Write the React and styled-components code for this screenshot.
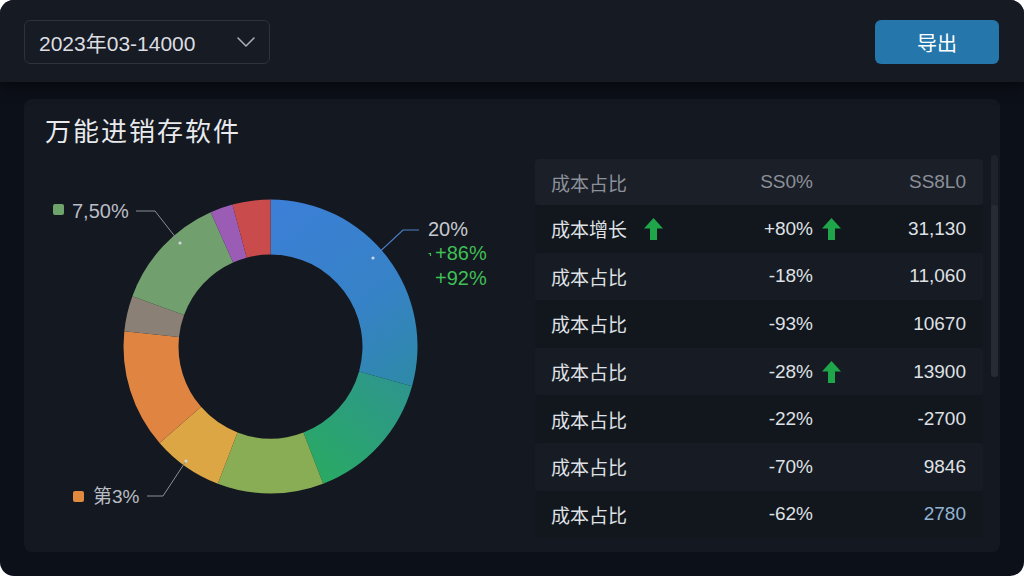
import React from "react";
import styled, { createGlobalStyle } from "styled-components";

const Global = createGlobalStyle`
  html, body { margin: 0; padding: 0; background: #ffffff; }
  body { font-family: "Liberation Sans", "Noto Sans CJK SC", sans-serif; }
  * { box-sizing: border-box; }
`;

const Frame = styled.div`
  width: 1024px;
  height: 576px;
  border-radius: 14px;
  overflow: hidden;
  background: #0c1019;
  display: flex;
  flex-direction: column;
`;

const TopBar = styled.header`
  height: 82px;
  flex: none;
  background: #151a23;
  padding: 20px 25px 0 24px;
  display: flex;
  justify-content: space-between;
  align-items: flex-start;
  box-shadow: 0 6px 14px rgba(0, 0, 0, 0.45);
  position: relative;
  z-index: 1;
`;

const Select = styled.div`
  width: 246px;
  height: 44px;
  border: 1px solid #2d323b;
  border-radius: 6px;
  background: #161b24;
  display: flex;
  align-items: center;
  justify-content: space-between;
  padding: 0 13px 0 14px;
  color: #dcdee2;
  font-size: 21px;
`;

const ExportButton = styled.button`
  width: 124px;
  height: 44px;
  border: none;
  border-radius: 6px;
  background: #2476ab;
  color: #ffffff;
  font-family: "Noto Sans CJK SC", sans-serif;
  font-size: 20px;
  display: flex;
  align-items: center;
  justify-content: center;
  padding: 0;
`;

const Main = styled.main`
  flex: 1;
  padding: 17px 24px 24px 24px;
  display: flex;
`;

const Panel = styled.section`
  flex: 1;
  background: #141820;
  border-radius: 8px;
  display: flex;
  flex-direction: column;
`;

const Title = styled.h1`
  margin: 0;
  height: 55px;
  flex: none;
  padding: 13px 0 0 21px;
  font-family: "Noto Sans CJK SC", sans-serif;
  font-weight: 400;
  font-size: 26px;
  letter-spacing: 2px;
  line-height: 36px;
  color: #e8eaed;
`;

const Body = styled.div`
  flex: 1;
  display: flex;
  align-items: flex-start;
`;

const ChartSvg = styled.svg`
  width: 511px;
  height: 390px;
  flex: none;
  display: block;
`;

const Label = styled.text`
  font-family: "Liberation Sans", "Noto Sans CJK SC", sans-serif;
  font-size: ${(p) => p.$size || 20}px;
  fill: ${(p) => p.$color};
`;

const TableWrap = styled.div`
  width: 448px;
  flex: none;
  padding-top: 5px;
`;

const Row = styled.div`
  display: grid;
  grid-template-columns: 162px 100px 32px 121px;
  align-items: center;
  height: ${(p) => (p.$head ? 46 : 47.6)}px;
  padding: 0 17px 0 16px;
  border-radius: 4px;
  background: ${(p) => (p.$head ? "#1b1f28" : p.$alt ? "#171b23" : "#12161d")};
  font-size: 19px;
  color: ${(p) => (p.$head ? "#8b9099" : "#dfe1e5")};
`;

const NameCell = styled.div`
  display: flex;
  align-items: center;
  gap: 17px;
  font-family: "Noto Sans CJK SC", sans-serif;
  font-size: 19px;
`;

const ValueCell = styled.div`
  text-align: right;
`;

const ArrowCell = styled.div`
  display: flex;
  align-items: center;
  padding-left: 9px;
`;

const AmountCell = styled.div`
  text-align: right;
  color: ${(p) => p.$color || "inherit"};
`;

const Scrollbar = styled.div`
  width: 7px;
  height: 222px;
  margin: 1px 0 0 8px;
  border-radius: 4px;
  background: #1e232b;
  display: flex;
  flex-direction: column;
  justify-content: flex-end;
`;

const Thumb = styled.div`
  height: 172px;
  border-radius: 4px;
  background: #262b34;
`;

const Chevron = () => (
  <svg width="20" height="12" viewBox="0 0 20 12">
    <path d="M2 2 L10 10 L18 2" fill="none" stroke="#a9adb5" strokeWidth="1.6" strokeLinecap="round" strokeLinejoin="round" />
  </svg>
);

const UpArrow = () => (
  <svg width="19" height="22" viewBox="0 0 19 22">
    <path d="M9.5 0 L19 10.5 L13 10.5 L13 22 L6 22 L6 10.5 L0 10.5 Z" fill="#1fa64a" />
  </svg>
);

const CX = 246.5;
const CY = 192.5;
const RO = 147;
const RI = 92;

const pt = (r, a) => {
  const rad = (a * Math.PI) / 180;
  return [CX + r * Math.sin(rad), CY - r * Math.cos(rad)];
};

const arcPath = (a0, a1) => {
  const large = a1 - a0 > 180 ? 1 : 0;
  const [x0, y0] = pt(RO, a0);
  const [x1, y1] = pt(RO, a1);
  const [x2, y2] = pt(RI, a1);
  const [x3, y3] = pt(RI, a0);
  return `M${x0} ${y0} A${RO} ${RO} 0 ${large} 1 ${x1} ${y1} L${x2} ${y2} A${RI} ${RI} 0 ${large} 0 ${x3} ${y3} Z`;
};

const segments = [
  { a0: 0, a1: 105.7, fill: "url(#gBlue)" },
  { a0: 105.7, a1: 159, fill: "url(#gTeal)" },
  { a0: 159, a1: 201, fill: "#88ad55" },
  { a0: 201, a1: 229, fill: "#dca645" },
  { a0: 229, a1: 276, fill: "#e08442" },
  { a0: 276, a1: 290, fill: "#8a8075" },
  { a0: 290, a1: 336, fill: "#71a06e" },
  { a0: 336, a1: 345, fill: "#9b5cb6" },
  { a0: 345, a1: 360, fill: "#c94b4b" },
];

const Donut = () => (
  <ChartSvg viewBox="0 0 511 390">
    <defs>
      <linearGradient id="gBlue" gradientUnits="userSpaceOnUse" x1="246" y1="45" x2="390" y2="235">
        <stop offset="0" stopColor="#3c7fd8" />
        <stop offset="0.6" stopColor="#3682c6" />
        <stop offset="1" stopColor="#2d8aa6" />
      </linearGradient>
      <linearGradient id="gTeal" gradientUnits="userSpaceOnUse" x1="390" y1="230" x2="300" y2="335">
        <stop offset="0" stopColor="#2e958f" />
        <stop offset="1" stopColor="#29aa62" />
      </linearGradient>
    </defs>
    {segments.map((s, i) => (
      <path key={i} d={arcPath(s.a0, s.a1)} fill={s.fill} />
    ))}

    <rect x="29" y="50" width="11" height="11" rx="2" fill="#6ea46c" />
    <Label x="48" y="64" $color="#b9bdc4">7,50%</Label>
    <path d="M112 57 L131 57 L156 89" fill="none" stroke="#8a8f97" strokeWidth="1" />
    <circle cx="156" cy="89" r="1.6" fill="#d0d3d8" />

    <path d="M349 104 L379 76 L395 76" fill="none" stroke="#4a80c8" strokeWidth="1.2" />
    <circle cx="349" cy="104" r="1.6" fill="#c8d6ea" />
    <Label x="404" y="82" $color="#c6cad0">20%</Label>
    <path d="M404.5 99.5 L406.5 99.5 L406.5 102" fill="none" stroke="#3fbf55" strokeWidth="1.2" />
    <Label x="411" y="106" $color="#3fbf55">+86%</Label>
    <Label x="411" y="131" $color="#3fbf55">+92%</Label>

    <rect x="49" y="337" width="11" height="11" rx="2" fill="#e0893f" />
    <Label x="69" y="349" $size={19} $color="#b9bdc4">第3%</Label>
    <path d="M123 342 L139 342 L162 307" fill="none" stroke="#8a8f97" strokeWidth="1" />
    <circle cx="162" cy="307" r="1.6" fill="#d0d3d8" />
  </ChartSvg>
);

const rows = [
  { name: "成本增长", nameArrow: true, value: "+80%", arrow: true, amount: "31,130" },
  { name: "成本占比", value: "-18%", amount: "11,060" },
  { name: "成本占比", value: "-93%", amount: "10670" },
  { name: "成本占比", value: "-28%", arrow: true, amount: "13900" },
  { name: "成本占比", value: "-22%", amount: "-2700" },
  { name: "成本占比", value: "-70%", amount: "9846" },
  { name: "成本占比", value: "-62%", amount: "2780", color: "#93b4d4" },
];

export default function App() {
  return (
    <>
      <Global />
      <Frame>
        <TopBar>
          <Select>
            <span>2023年03-14000</span>
            <Chevron />
          </Select>
          <ExportButton>导出</ExportButton>
        </TopBar>
        <Main>
          <Panel>
            <Title>万能进销存软件</Title>
            <Body>
              <Donut />
              <TableWrap>
                <Row $head>
                  <NameCell>成本占比</NameCell>
                  <ValueCell>SS0%</ValueCell>
                  <ArrowCell />
                  <AmountCell>SS8L0</AmountCell>
                </Row>
                {rows.map((r, i) => (
                  <Row key={i} $alt={i % 2 === 1}>
                    <NameCell>
                      {r.name}
                      {r.nameArrow && <UpArrow />}
                    </NameCell>
                    <ValueCell>{r.value}</ValueCell>
                    <ArrowCell>{r.arrow && <UpArrow />}</ArrowCell>
                    <AmountCell $color={r.color}>{r.amount}</AmountCell>
                  </Row>
                ))}
              </TableWrap>
              <Scrollbar>
                <Thumb />
              </Scrollbar>
            </Body>
          </Panel>
        </Main>
      </Frame>
    </>
  );
}
